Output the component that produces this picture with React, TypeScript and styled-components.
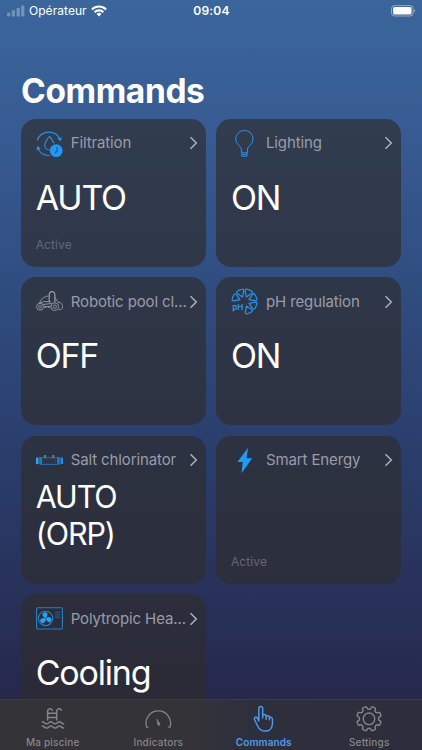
import React from "react";
import styled, { createGlobalStyle } from "styled-components";

const GlobalStyle = createGlobalStyle`
  * { box-sizing: border-box; }
  body { margin: 0; background: #25274d; }
`;

const Screen = styled.div`
  display: flex;
  flex-direction: column;
  width: 422px;
  height: 750px;
  overflow: hidden;
  color: #fff;
  font-family: Inter, "Liberation Sans", sans-serif;
  background: linear-gradient(180deg, #3b669b 0%, #375b92 18%, #304d80 38%, #2a3e6c 60%, #283159 80%, #26274a 94%, #26274a 100%);
`;

const StatusBar = styled.header`
  display: grid;
  grid-template-columns: 1fr auto 1fr;
  align-items: center;
  height: 21px;
  flex: none;
  padding: 0 6px 0 7px;
  font-size: 12px;
`;

const Carrier = styled.div`
  display: flex;
  align-items: center;
  gap: 4px;
  letter-spacing: 0.05px;
`;

const Clock = styled.div`
  font-weight: 600;
  letter-spacing: 0.2px;
`;

const BatterySlot = styled.div`
  display: flex;
  justify-content: flex-end;
`;

const Title = styled.h1`
  flex: none;
  height: 97.5px;
  margin: 0;
  padding: 48.5px 0 0 21px;
  font-size: 33.5px;
  line-height: 42px;
  font-weight: 700;
  letter-spacing: -0.4px;
`;

const Content = styled.main`
  flex: 1;
  min-height: 0;
  overflow: hidden;
  display: grid;
  grid-template-columns: 185.3px 185.3px;
  grid-auto-rows: 148.3px;
  gap: 10.3px 10px;
  padding: 0 20.7px;
`;

const Card = styled.section`
  display: flex;
  flex-direction: column;
  padding: 9px 8px 13px 15px;
  border-radius: 15px;
  background: rgba(46, 45, 44, 0.67);
`;

const CardHeader = styled.div`
  display: flex;
  align-items: center;
  height: 31px;
  flex: none;
`;

const IconSlot = styled.span`
  display: flex;
  flex: none;
  width: 27px;
  height: 27px;
  margin-right: 8px;
`;

const CardTitle = styled.span`
  flex: 1;
  min-width: 0;
  white-space: nowrap;
  font-size: 15px;
  line-height: 20px;
  color: #9a9ca9;
  letter-spacing: -0.12px;
`;

const Value = styled.div<{ $compact?: boolean }>`
  margin-top: ${(p) => (p.$compact ? "2px" : "18px")};
  font-size: ${(p) => (p.$compact ? 30.5 : 34)}px;
  line-height: ${(p) => (p.$compact ? 37.3 : 42)}px;
  letter-spacing: ${(p) => (p.$compact ? -1.1 : -1.2)}px;
  white-space: pre-line;
`;

const Status = styled.div`
  margin-top: auto;
  font-size: 12px;
  line-height: 18px;
  color: #646979;
  letter-spacing: 0.1px;
`;

const TabBar = styled.nav`
  display: grid;
  grid-template-columns: repeat(4, 1fr);
  flex: none;
  height: 51px;
  border-top: 1px solid #3c3c47;
  background: linear-gradient(90deg, #333338 0%, #333338 45%, #2e2f3d 60%, #2d2d3b 100%);
`;

const Tab = styled.div<{ $active?: boolean }>`
  display: flex;
  flex-direction: column;
  align-items: center;
  padding-top: 4px;
  gap: 2px;
  color: ${(p) => (p.$active ? "#509be8" : "#85858b")};
  font-size: 10px;
  line-height: 16px;
  font-weight: ${(p) => (p.$active ? 600 : 500)};
  letter-spacing: ${(p) => (p.$active ? 0.1 : 0.2)}px;
`;

const BLUE = "#2b93e8";

const Signal = () => (
  <svg width="18" height="12" viewBox="0 0 18 12" fill="#fff" fillOpacity="0.3">
    <rect x="0" y="7.5" width="3.2" height="4" rx="0.8" />
    <rect x="4.8" y="5.3" width="3.2" height="6.2" rx="0.8" />
    <rect x="9.6" y="3" width="3.2" height="8.5" rx="0.8" />
    <rect x="14.2" y="0.6" width="3.2" height="10.9" rx="0.8" />
  </svg>
);

const Wifi = () => (
  <svg width="16" height="12" viewBox="0 0 16 12" fill="none" stroke="#fff" strokeWidth="2.1">
    <path d="M.9 4.4a10.2 10.2 0 0 1 14.2 0" />
    <path d="M3.6 7.2a6.3 6.3 0 0 1 8.8 0" />
    <path d="M8 11.5 5.6 9a3.4 3.4 0 0 1 4.8 0z" fill="#fff" stroke="none" />
  </svg>
);

const Battery = () => (
  <svg width="25" height="12" viewBox="0 0 25 12">
    <rect x="0.5" y="0.6" width="21.6" height="10.4" rx="3" fill="none" stroke="#fff" strokeOpacity="0.45" />
    <rect x="2.1" y="2.1" width="18.4" height="7.4" rx="1.6" fill="#fff" />
    <path d="M23.3 4.1v3.4c1.3-.5 1.3-2.9 0-3.4z" fill="#fff" fillOpacity="0.5" />
  </svg>
);

const ChevronSvg = styled.svg`
  flex: none;
`;

const Chevron = () => (
  <ChevronSvg width="9" height="14" viewBox="0 0 9 14" fill="none" stroke="#aeb1bb" strokeWidth="1.5">
    <path d="M1.5 1.3 7.3 7l-5.8 5.7" />
  </ChevronSvg>
);

const FiltrationIcon = () => (
  <svg width="27" height="27" viewBox="0 0 27 27" fill="none" stroke={BLUE} strokeWidth="1.1">
    <path d="M1.2 10.5a12.2 12.2 0 0 1 22.8-1" />
    <path d="m21.4 8.2 2.8 3 2.1-3.6z" fill={BLUE} stroke="none" />
    <path d="M1.5 17.6c2 5 6.4 8 12.2 7.9" />
    <path d="m.3 20 1.3-4.2 3.1 3.2z" fill={BLUE} stroke="none" />
    <path d="M13.5 6.2c-2.4 3.4-4.9 6.3-4.9 9.1 0 2.8 2.2 4.7 5 4.7M13.5 6.2c2 2.8 3.6 4.8 4.5 7" />
    <circle cx="20.2" cy="20.6" r="6.4" fill="#2196f3" stroke="none" />
    <path d="M21 17v4.2l-2 1.6" stroke="#245080" />
  </svg>
);

const BulbIcon = () => (
  <svg width="27" height="27" viewBox="0 0 27 27" fill="none" stroke={BLUE} strokeWidth="1">
    <path d="M10.4 22.8v-3.7c0-2.5-5.7-4.7-5.7-10a8.7 8.7 0 0 1 17.4 0c0 5.3-5.7 7.5-5.7 10v3.7z" />
    <path d="M10.8 23v3.2h5.2V23M11.5 24.6h4" />
  </svg>
);

const RobotIcon = () => (
  <svg width="27" height="27" viewBox="0 0 27 27" fill="none" stroke="#999ca4" strokeWidth="0.9">
    <circle cx="4" cy="18.7" r="3.5" />
    <circle cx="4" cy="18.7" r="1.5" />
    <circle cx="18.7" cy="18.7" r="3.9" />
    <circle cx="18.7" cy="18.7" r="1.7" />
    <path d="M3.5 15c1-2.8 3.5-5.8 7-6.7l2.3-.3M8 18.7h6.7M6.8 16.5 15.6 15.5M18.8 9.5l3.7 4.8M3.5 15l5-1.5 6.5.5" />
    <path d="M13.2 14V7.5c0-5.2 5.7-5.2 5.7 0v7" strokeWidth="1.2" />
    <path d="M22 14.6c2.7-.8 4.5 1.2 4.5 4.1M22.8 21.6c2 .5 3.7-.8 3.7-2.9" />
    <path d="M8.5 18.8h1.5M11.8 18.8h1.7" strokeWidth="1.8" />
  </svg>
);

const PhIcon = () => (
  <svg width="27" height="27" viewBox="0 0 27 27" fill="none" stroke={BLUE} strokeWidth="1.2" strokeLinejoin="round">
    {[-68, -23, 22, 67, 112, 157].map((angle) => (
      <path
        key={angle}
        transform={`rotate(${angle} 13.5 13.5)`}
        d="M13.5 8.6 10.1 3.4Q9.200 1.500 10.900 1.200a12.600 12.600 0 0 1 5.200 0Q17.800 1.500 16.900 3.400z"
      />
    ))}
    <text x="1.3" y="21.8" fill={BLUE} stroke="none" fontFamily="Inter, sans-serif" fontSize="8" fontWeight="700">pH</text>
  </svg>
);

const ChlorinatorIcon = () => (
  <svg width="27" height="27" viewBox="0 0 27 27" fill="none" stroke={BLUE} strokeWidth="0.7">
    <rect x="0" y="10.6" width="2.5" height="6.4" rx=".5" fill="#24aaf5" stroke="none" />
    <rect x="3.2" y="10" width="2.4" height="7.6" fill="#2577b8" stroke="none" />
    <rect x="21.4" y="10" width="2.4" height="7.6" fill="#2577b8" stroke="none" />
    <rect x="24.5" y="10.6" width="2.5" height="6.4" rx=".5" fill="#208de8" stroke="none" />
    <path d="M5.6 10.7h16v6.8h-16z" strokeOpacity=".8" />
    <path d="M7.5 12.2h12v3.8h-12z" strokeOpacity=".25" />
    <path d="M9 10.7V8M17.3 10.7V8" stroke="#24aaf5" strokeWidth="1.6" />
  </svg>
);

const BoltIcon = () => (
  <svg width="27" height="27" viewBox="0 0 27 27" fill="#229bf5">
    <path d="M17 .7 6.400 15h5.400L10.500 26.300 21.200 11.200h-5.600z" />
  </svg>
);

const HeatPumpIcon = () => (
  <svg width="27" height="27" viewBox="0 0 27 27" fill="none" stroke="#2481c8" strokeWidth="1.1">
    <rect x=".6" y="2.8" width="25.8" height="21.2" rx="1" />
    <circle cx="9.6" cy="13.4" r="7.2" />
    {[0, 120, 240].map((angle) => (
      <path key={angle} transform={`rotate(${angle} 9.6 13.4)`} d="M9.6 13c-3.7-1-3.6-5.200-.8-5.500 3-.2 3.300 2.500.8 5.500z" fill="#27a6f4" stroke="#27a6f4" strokeWidth=".4" />
    ))}
    <path d="M19 7.2h5M19 9.7h5M19 12.2h5" strokeWidth=".9" strokeOpacity=".75" />
  </svg>
);

const PoolIcon = () => (
  <svg width="28" height="28" viewBox="0 0 28 28" fill="none" stroke="currentColor" strokeWidth="1.5" strokeLinecap="round">
    <g transform="translate(0 -1)">
      <path d="M8.6 17V8a2.4 2.4 0 0 1 4.6-.7M17.7 17V8a2.4 2.4 0 0 1 4.600-.7M8.600 10.300h9M8.600 14.400h9" />
      <path d="M3.300 18.800c1.900 0 2 2 4.300 2s2.200-2 4.200-2 2.200 2 4.400 2 2.200-2 4.200-2 2 2 4.200 2" />
      <path d="M3.300 23c1.900 0 2 2 4.300 2s2.200-2 4.200-2 2.200 2 4.400 2 2.200-2 4.200-2 2 2 4.200 2" />
    </g>
  </svg>
);

const GaugeIcon = () => (
  <svg width="28" height="28" viewBox="0 0 28 28" fill="none" stroke="currentColor" strokeWidth="1.3" strokeLinecap="round">
    <path d="M3.9 23.200H2.700a12.300 12.300 0 1 1 23.200 0h-1.200" />
    <path d="m12.400 14 1 6.400c.5 1.900 3.500 1.300 2.800-.7z" fill="currentColor" stroke="none" />
  </svg>
);

const HandIcon = () => (
  <svg width="28" height="28" viewBox="0 0 28 28" fill="none" stroke="currentColor" strokeWidth="1.5" strokeLinecap="round" strokeLinejoin="round">
    <g transform="translate(.2 1) scale(.96 1)">
      <path d="M9 16V3.600a2 2 0 0 1 4 0V13M13 11.200c0-2.300 3.600-2.200 3.600.200v2.800M16.600 12c.4-1.800 3.400-1.500 3.400.7v2.100M20 13.200c.6-1.500 3.200-1 3.200 1v4.300c0 4.800-3.200 7.600-7.500 7.600-4 0-6.500-2-8.100-5.400l-3-6.200c-.9-2 1.300-3.300 2.600-1.800L9 15.800" />
    </g>
  </svg>
);

const gearPath = (() => {
  const points: string[] = [];
  for (let i = 0; i < 8; i++) {
    const at = (r: number, deg: number) => {
      const a = ((i * 45 + deg) * Math.PI) / 180;
      return `${(14 + r * Math.sin(a)).toFixed(2)} ${(14 - r * Math.cos(a)).toFixed(2)}`;
    };
    points.push(`${i ? "L" : "M"}${at(10, -14)}L${at(11.7, -11)}Q${at(12.5, -9)} ${at(12.4, -6)}L${at(12.4, 6)}Q${at(12.5, 9)} ${at(11.7, 11)}L${at(10, 14)}Q${at(9, 22.5)} ${at(10, 31)}`);
  }
  return points.join("") + "Z";
})();

const GearIcon = () => (
  <svg width="28" height="28" viewBox="0 0 28 28" fill="none" stroke="currentColor" strokeWidth="1.4" strokeLinejoin="round">
    <g transform="translate(0 .8)">
      <path d={gearPath} transform="rotate(22.5 14 14)" />
      <circle cx="14" cy="14" r="5.8" />
    </g>
  </svg>
);

interface Command {
  title: string;
  icon: React.ReactNode;
  value?: string;
  status?: string;
  compact?: boolean;
}

const commands: Command[] = [
  { title: "Filtration", icon: <FiltrationIcon />, value: "AUTO", status: "Active" },
  { title: "Lighting", icon: <BulbIcon />, value: "ON" },
  { title: "Robotic pool cl...", icon: <RobotIcon />, value: "OFF" },
  { title: "pH regulation", icon: <PhIcon />, value: "ON" },
  { title: "Salt chlorinator", icon: <ChlorinatorIcon />, value: "AUTO\n(ORP)", compact: true },
  { title: "Smart Energy", icon: <BoltIcon />, status: "Active" },
  { title: "Polytropic Hea...", icon: <HeatPumpIcon />, value: "Cooling" },
];

const tabs = [
  { label: "Ma piscine", icon: <PoolIcon /> },
  { label: "Indicators", icon: <GaugeIcon /> },
  { label: "Commands", icon: <HandIcon />, active: true },
  { label: "Settings", icon: <GearIcon /> },
];

export default function App() {
  return (
    <Screen>
      <GlobalStyle />
      <StatusBar>
        <Carrier>
          <Signal />
          <span>Opérateur</span>
          <Wifi />
        </Carrier>
        <Clock>09:04</Clock>
        <BatterySlot>
          <Battery />
        </BatterySlot>
      </StatusBar>
      <Title>Commands</Title>
      <Content>
        {commands.map((c) => (
          <Card key={c.title}>
            <CardHeader>
              <IconSlot>{c.icon}</IconSlot>
              <CardTitle>{c.title}</CardTitle>
              <Chevron />
            </CardHeader>
            {c.value && <Value $compact={c.compact}>{c.value}</Value>}
            {c.status && <Status>{c.status}</Status>}
          </Card>
        ))}
      </Content>
      <TabBar>
        {tabs.map((t) => (
          <Tab key={t.label} $active={t.active}>
            {t.icon}
            {t.label}
          </Tab>
        ))}
      </TabBar>
    </Screen>
  );
}
